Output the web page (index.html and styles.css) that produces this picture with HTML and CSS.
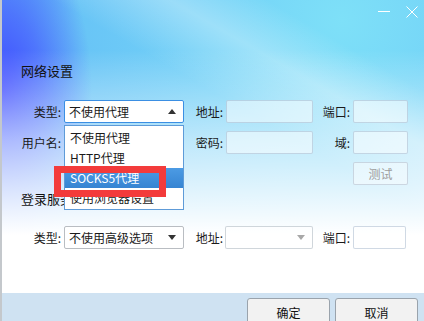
FILE: index.html
```html
<!DOCTYPE html>
<html lang="zh-CN">
<head>
  <meta charset="UTF-8" />
  <title>网络设置</title>
  <link rel="stylesheet" href="styles.css">
</head>
<body>

<div class="window">
  <div class="titlebar">
    <svg class="icon-min" width="12" height="12" viewBox="0 0 12 12"><line x1="0" y1="5.5" x2="12" y2="5.5" stroke="#fff" stroke-width="1"/></svg>
    <svg class="icon-close" width="12" height="12" viewBox="0 0 12 12"><path d="M0.5 0.5 L11.5 11.5 M11.5 0.5 L0.5 11.5" stroke="#fff" stroke-width="1"/></svg>
  </div>

  <h2 class="section-title">网络设置</h2>
  <div class="form-grid">
    <label>类型:</label>
    <div class="select open">
      <span>不使用代理</span><span class="arrow-up"></span>
      <ul class="dropdown">
        <li>不使用代理</li>
        <li>HTTP代理</li>
        <li class="active">SOCKS5代理</li>
        <li>使用浏览器设置</li>
      </ul>
    </div>
    <label>地址:</label>
    <div class="field"></div>
    <label>端口:</label>
    <div class="field"></div>

    <label>用户名:</label>
    <div class="field"></div>
    <label>密码:</label>
    <div class="field"></div>
    <label>域:</label>
    <div class="field"></div>

    <button class="btn-test" disabled>测试</button>
  </div>

  <h2 class="section-title second">登录服务器</h2>
  <div class="form-grid">
    <label>类型:</label>
    <div class="select plain">
      <span>不使用高级选项</span><span class="arrow-down"></span>
    </div>
    <label>地址:</label>
    <div class="select disabled">
      <span></span><span class="arrow-down light"></span>
    </div>
    <label>端口:</label>
    <div class="field narrow"></div>
  </div>

  <div class="footer">
    <button class="btn">确定</button>
    <button class="btn">取消</button>
  </div>

  <div class="annotation"></div>
</div>

</body>
</html>
```

FILE: styles.css
```css
body {
  margin: 0;
  font-family: "Noto Sans CJK SC", "Liberation Sans", sans-serif;
  font-size: 12px;
  color: #1a1a1a;
}
.window {
  position: relative;
  width: 424px;
  height: 321px;
  box-sizing: border-box;
  border-left: 2px solid #c4c8cc;
  display: flex;
  flex-direction: column;
  overflow: hidden;
  background:
    linear-gradient(180deg, rgba(255,255,255,0) 50px, rgba(255,255,255,0.55) 140px, #fff 235px),
    linear-gradient(30deg, rgba(255,255,255,0) 62%, rgba(255,255,255,0.3) 74%, rgba(255,255,255,0) 84%),
    radial-gradient(ellipse 90px 170px at 0 90px, #3f4cff 0, rgba(70,90,255,0.7) 45%, rgba(90,140,255,0) 100%),
    radial-gradient(circle 380px at 340px 20px, #7ee0f8 0, #68c4f6 70%, #5aa6f8 100%);
  background-color: #5a9cf8;
}
.titlebar {
  height: 62px;
  box-sizing: border-box;
  display: flex;
  justify-content: flex-end;
  align-items: flex-start;
  gap: 16px;
  padding: 6px 6px 0 0;
}
.section-title {
  margin: 0 0 0 19px;
  font-size: 13px;
  font-weight: normal;
  line-height: 18px;
  color: #111;
}
.section-title.second {
  margin-top: 4px;
}
.form-grid {
  display: grid;
  grid-template-columns: 62px 120px 42px 87px 40px 55px;
  grid-auto-rows: 23px;
  row-gap: 8px;
  margin-top: 20px;
}
.form-grid + .section-title.second {
  margin-top: 5px;
}
.section-title.second + .form-grid {
  margin-top: 18px;
}
label {
  text-align: right;
  padding-right: 3px;
  line-height: 23px;
}
.field {
  box-sizing: border-box;
  border: 1px solid rgba(150,170,195,0.45);
  background: rgba(255,255,255,0.5);
  border-radius: 2px;
}
.field.narrow {
  margin-right: 2px;
}
.select {
  position: relative;
  box-sizing: border-box;
  display: flex;
  align-items: center;
  justify-content: space-between;
  padding-left: 4px;
  background: #fff;
  border: 1px solid #b9bdc2;
  border-radius: 2px;
}
.select.open {
  border-color: #3b8fe3;
}
.select.disabled {
  background: rgba(255,255,255,0.6);
  border-color: rgba(170,180,190,0.55);
  margin-left: -1px;
}
.arrow-up, .arrow-down {
  width: 0;
  height: 0;
  margin-right: 7px;
  border-left: 4px solid transparent;
  border-right: 4px solid transparent;
}
.arrow-up {
  border-bottom: 5px solid #333;
}
.arrow-down {
  border-top: 5px solid #333;
}
.arrow-down.light {
  border-top-color: #a8a8a8;
}
.dropdown {
  position: absolute;
  top: 24px;
  left: -1px;
  width: 120px;
  box-sizing: border-box;
  margin: 0;
  padding: 2px 0 1px;
  list-style: none;
  background: #fff;
  border: 1px solid #5e9bd8;
  z-index: 2;
}
.dropdown li {
  height: 20px;
  line-height: 20px;
  padding-left: 5px;
  white-space: nowrap;
}
.dropdown li.active {
  background: linear-gradient(#4c9be4, #3684d2);
  color: #fff;
}
.btn-test {
  grid-column: 6;
  font: inherit;
  color: #9c9c9c;
  background: rgba(255,255,255,0.45);
  border: 1px solid rgba(170,180,195,0.5);
  border-radius: 2px;
  padding: 0;
}
.footer {
  margin-top: auto;
  height: 28px;
  box-sizing: border-box;
  background: #cfe2f2;
  display: flex;
  justify-content: flex-end;
  align-items: flex-start;
  gap: 5px;
  padding: 5px 6px 0 0;
  overflow: hidden;
}
.btn {
  width: 83px;
  height: 30px;
  flex: none;
  padding: 0;
  font: inherit;
  line-height: 22px;
  color: #111;
  background: #f2f2f2;
  border: 1px solid #9aa3ac;
  border-radius: 3px;
}
.annotation {
  position: absolute;
  left: 52px;
  top: 166px;
  width: 112px;
  height: 31px;
  box-sizing: border-box;
  border: 7px solid #f33b3b;
  z-index: 3;
}
```
